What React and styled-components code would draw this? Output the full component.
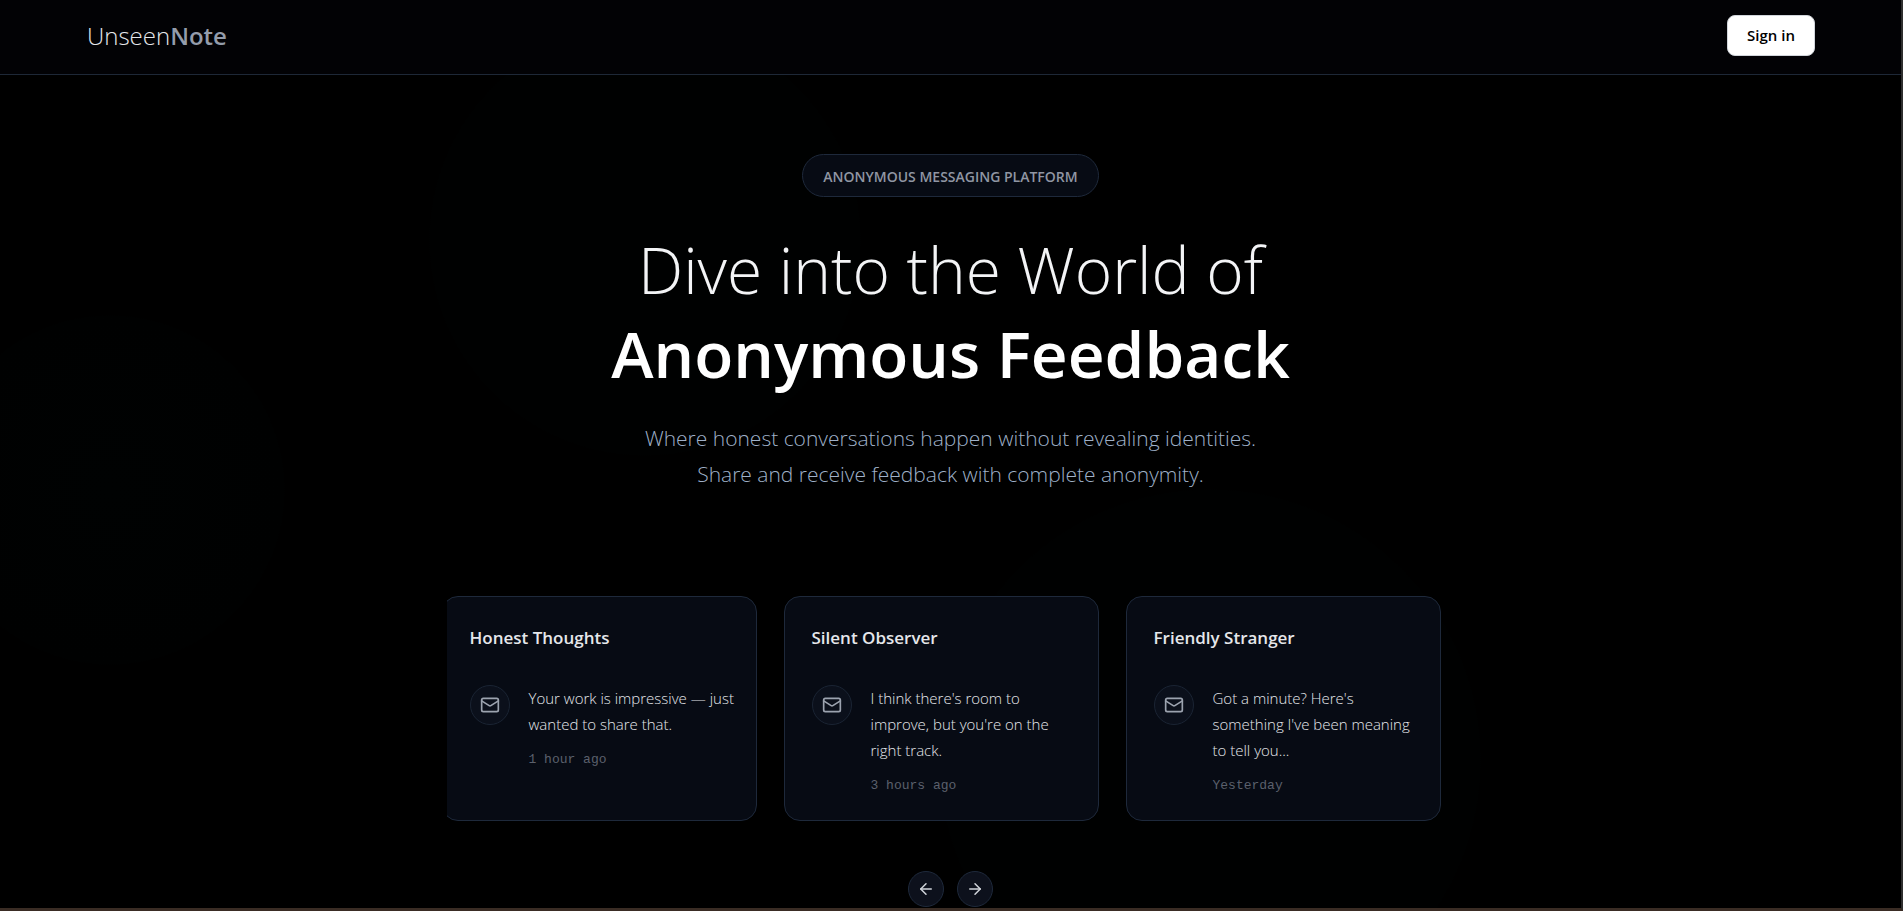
import React from "react";
import styled, { createGlobalStyle } from "styled-components";
import { ArrowLeft, ArrowRight, Mail } from "lucide-react";

const Global = createGlobalStyle`
  *, *::before, *::after { box-sizing: border-box; }
  html, body { margin: 0; background: #000; }
  body {
    color: #fff;
    font-family: "Open Sans", "Noto Sans", sans-serif;
    overflow: hidden;
  }
  h1, h2, p { margin: 0; }
`;

const Page = styled.div`
  position: relative;
  height: 100vh;
  display: flex;
  flex-direction: column;
  overflow: hidden;
  border-right: 2px solid #2e2e2e;
  border-bottom: 3px solid #3a2c24;
  background:
    radial-gradient(circle at 110px 490px, #000202 0, #000101 174px, transparent 175px),
    radial-gradient(circle at 645px 240px, #000101 0, #000101 215px, transparent 216px),
    radial-gradient(circle at 1210px 760px, #000101 0, #000101 270px, transparent 271px),
    #000;
`;

const Header = styled.header`
  flex: none;
  display: flex;
  align-items: center;
  justify-content: space-between;
  height: 75px;
  padding: 0 86px 3px 87px;
  border-bottom: 1px solid #1e2837;
  background: #020205;
`;

const Logo = styled.a`
  color: #e5e7eb;
  font-size: 24px;
  font-weight: 300;
  line-height: 36px;
  text-decoration: none;

  strong {
    color: #949cab;
    font-weight: 600;
  }
`;

const SignIn = styled.button`
  height: 41px;
  min-width: 88px;
  padding: 0 16px 2px;
  border: 1px solid #d1d5db;
  border-radius: 8px;
  background: #fff;
  color: #000;
  font: 600 15px/20px "Open Sans", sans-serif;
`;

const Hero = styled.main`
  flex: 1;
  display: flex;
  flex-direction: column;
  align-items: center;
  padding-top: 79px;
`;

const Badge = styled.p`
  padding: 11px 20px 9px;
  border: 1px solid #1e293b;
  border-radius: 22px;
  background: #070b14;
  color: #9096a3;
  font-size: 14px;
  font-weight: 600;
  line-height: 21px;
  text-transform: uppercase;
`;

const Title = styled.h1`
  margin-top: 31px;
  color: #f3f4f6;
  font-size: 64px;
  font-weight: 300;
  line-height: 84px;
  text-align: center;

  strong {
    display: block;
    color: #fff;
    font-weight: 600;
  }
`;

const Lead = styled.p`
  margin-top: 24px;
  color: #9fb0c8;
  font-size: 21px;
  font-weight: 300;
  line-height: 36px;
  text-align: center;
`;

const Carousel = styled.section`
  width: 1008px;
  max-width: 100%;
  margin-top: 104px;
  overflow: hidden;
`;

const Track = styled.div`
  display: flex;
  gap: 27px;
  margin-left: -5px;
`;

const Card = styled.article`
  flex: 0 0 315px;
  min-height: 225px;
  padding: 27px 18px 26px 27px;
  border: 1px solid #1e293b;
  border-radius: 16px;
  background: #070b14;
`;

const CardTitle = styled.h2`
  color: #e5e7eb;
  font-size: 17px;
  font-weight: 600;
  line-height: 28px;
`;

const Message = styled.div`
  display: flex;
  gap: 19px;
  margin-top: 33px;
`;

const Avatar = styled.span`
  flex: none;
  display: grid;
  place-items: center;
  width: 40px;
  height: 40px;
  border: 1px solid #1a2433;
  border-radius: 50%;
  background: #0b101b;
  color: #9ca3af;
`;

const Text = styled.p`
  color: #e5e7eb;
  font-size: 15px;
  font-weight: 300;
  line-height: 26px;
`;

const Time = styled.p`
  margin-top: 15px;
  color: #5b606c;
  font: 13px/16px "Liberation Mono", monospace;
`;

const Controls = styled.nav`
  display: flex;
  gap: 13px;
  margin-top: 50px;
`;

const RoundButton = styled.button`
  display: grid;
  place-items: center;
  width: 36px;
  height: 36px;
  padding: 0;
  border: 1px solid #1e293b;
  border-radius: 50%;
  background: #0d111c;
  color: #d1d5db;
`;

const messages = [
  { title: "Honest Thoughts", text: "Your work is impressive — just wanted to share that.", time: "1 hour ago" },
  { title: "Silent Observer", text: "I think there's room to improve, but you're on the right track.", time: "3 hours ago" },
  { title: "Friendly Stranger", text: "Got a minute? Here's something I've been meaning to tell you...", time: "Yesterday" },
];

export default function App() {
  return (
    <>
      <Global />
      <Page>
        <Header>
          <Logo href="#">Unseen<strong>Note</strong></Logo>
          <SignIn type="button">Sign in</SignIn>
        </Header>
        <Hero>
          <Badge>Anonymous Messaging Platform</Badge>
          <Title>Dive into the World of <strong>Anonymous Feedback</strong></Title>
          <Lead>
            Where honest conversations happen without revealing identities.
            <br />
            Share and receive feedback with complete anonymity.
          </Lead>
          <Carousel aria-label="Sample messages">
            <Track>
              {messages.map((m) => (
                <Card key={m.title}>
                  <CardTitle>{m.title}</CardTitle>
                  <Message>
                    <Avatar><Mail size={20} aria-hidden="true" /></Avatar>
                    <div>
                      <Text>{m.text}</Text>
                      <Time>{m.time}</Time>
                    </div>
                  </Message>
                </Card>
              ))}
            </Track>
          </Carousel>
          <Controls aria-label="Carousel">
            <RoundButton type="button" aria-label="Previous slide"><ArrowLeft size={18} /></RoundButton>
            <RoundButton type="button" aria-label="Next slide"><ArrowRight size={18} /></RoundButton>
          </Controls>
        </Hero>
      </Page>
    </>
  );
}
